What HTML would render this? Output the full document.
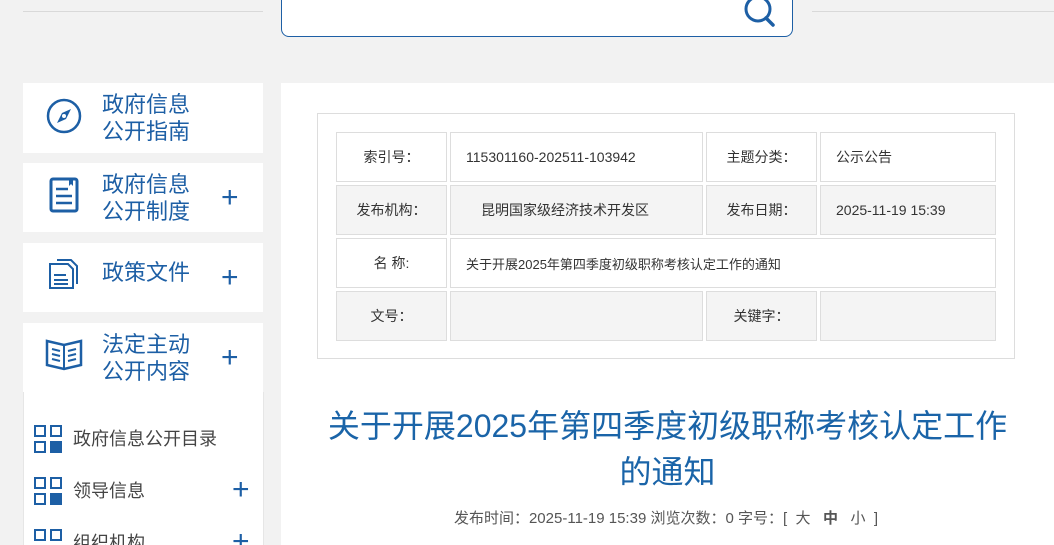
<!DOCTYPE html>
<html><head><meta charset="utf-8"><style>
*{margin:0;padding:0;box-sizing:border-box}
html,body{width:1054px;height:545px;overflow:hidden}
body{background:#f2f2f2;font-family:"Liberation Sans","Noto Sans CJK SC",sans-serif;position:relative}
.line{position:absolute;top:11px;height:1px;background:#d9d9d9}
.search{position:absolute;left:281px;top:-10px;width:512px;height:47px;background:#fff;border:1px solid #1d5fa5;border-radius:0 0 8px 8px}
.side{position:absolute;left:23px;width:240px;background:#fff;color:#1d5fa5}
.side .t{position:absolute;left:79px;font-size:22px;line-height:27px}
.side .plus{position:absolute;left:198px;font-size:30px;font-weight:300;line-height:30px}
.side svg{position:absolute}
.sub{position:absolute;left:23px;top:392px;width:241px;height:153px;background:#fff;border-left:1px solid #e6e6e6;border-right:1px solid #e6e6e6;overflow:hidden}
.si{position:absolute;left:10px;font-size:18px;color:#444}
.si .g{position:absolute;left:0;top:0;width:28px;height:28px}
.si .g i{position:absolute;width:12px;height:12px;border:2px solid #1d5fa5}
.si span{position:absolute;left:39px;top:2px;white-space:nowrap;line-height:24px}
.si b{position:absolute;left:198px;top:-4px;font-size:30px;font-weight:300;color:#1d5fa5}
.main{position:absolute;left:281px;top:83px;width:773px;height:462px;background:#fff;overflow:hidden}
.box{position:absolute;left:36px;top:30px;width:698px;height:246px;border:1px solid #ddd}
table{position:absolute;left:15px;top:15px;border-collapse:separate;border-spacing:3px}
td{border:1px solid #ddd;height:50px;font-size:14px;color:#333;padding:0}
tr.g td{background:#f4f4f4;height:50px}
td.l{text-align:center;width:111px}
td.v{padding-left:15px}
h1{position:absolute;left:0;width:773px;top:320px;text-align:center;font-size:32px;font-weight:normal;color:#1a64a8;line-height:46px;padding:0 44px}
.meta{position:absolute;top:424px;left:0;width:770px;text-align:center;font-size:15px;color:#555}
</style></head><body>
<div class="line" style="left:23px;width:240px"></div>
<div class="line" style="left:812px;width:242px"></div>
<div class="search"><svg style="position:absolute;left:458px;top:2px" width="40" height="36" viewBox="0 0 40 36"><circle cx="18" cy="16" r="12" fill="none" stroke="#1d5fa5" stroke-width="3"/><path d="M26 25l7 7" stroke="#1d5fa5" stroke-width="3.5" stroke-linecap="round"/></svg></div>

<div class="side" style="top:83px;height:70px">
<svg style="left:23px;top:15px" width="36" height="36" viewBox="0 0 36 36"><circle cx="18" cy="18" r="16" fill="none" stroke="#1d5fa5" stroke-width="2.5"/><path d="M25 11l-9 4-5 10 9-4z" fill="#1d5fa5"/><circle cx="18" cy="18" r="2" fill="#fff"/></svg>
<div class="t" style="top:8px">政府信息<br>公开指南</div></div>
<div class="side" style="top:163px;height:69px">
<svg style="left:26px;top:14px" width="30" height="36" viewBox="0 0 30 36"><rect x="2" y="2" width="26" height="32" rx="2" fill="none" stroke="#1d5fa5" stroke-width="3"/><path d="M7 12h12M7 19h16M7 26h16" stroke="#1d5fa5" stroke-width="2.5"/><path d="M20 2v7l2-2 2 2V2" fill="#1d5fa5"/></svg>
<div class="t" style="top:8px">政府信息<br>公开制度</div><div class="plus" style="top:20px">+</div></div>
<div class="side" style="top:243px;height:69px">
<svg style="left:25px;top:15px" width="32" height="32" viewBox="0 0 32 32"><path d="M2 6h18l5 5v19H2z" fill="none" stroke="#1d5fa5" stroke-width="2"/><path d="M9 2h14l6 6v18" fill="none" stroke="#1d5fa5" stroke-width="2"/><path d="M6 17h12M6 22h14M6 26h14" stroke="#1d5fa5" stroke-width="2"/></svg>
<div class="t" style="top:16px">政策文件</div><div class="plus" style="top:20px">+</div></div>
<div class="side" style="top:323px;height:69px">
<svg style="left:22px;top:14px" width="38" height="34" viewBox="0 0 38 34"><path d="M2 4l17 4 17-4v24l-17 4-17-4z" fill="none" stroke="#1d5fa5" stroke-width="2.5"/><path d="M19 8v24M7 12l8 2M7 17l8 2M7 22l8 2M31 12l-8 2M31 17l-8 2M31 22l-8 2" stroke="#1d5fa5" stroke-width="2"/></svg>
<div class="t" style="top:8px">法定主动<br>公开内容</div><div class="plus" style="top:20px">+</div></div>
<div class="sub">
<div class="si" style="top:33px"><div class="g"><i style="left:0;top:0"></i><i style="left:16px;top:0"></i><i style="left:0;top:16px"></i><i style="left:16px;top:16px;background:#1d5fa5"></i></div><span>政府信息公开目录</span></div>
<div class="si" style="top:85px"><div class="g"><i style="left:0;top:0"></i><i style="left:16px;top:0"></i><i style="left:0;top:16px"></i><i style="left:16px;top:16px;background:#1d5fa5"></i></div><span>领导信息</span><b>+</b></div>
<div class="si" style="top:137px"><div class="g"><i style="left:0;top:0"></i><i style="left:16px;top:0"></i><i style="left:0;top:16px"></i><i style="left:16px;top:16px;background:#1d5fa5"></i></div><span>组织机构</span><b>+</b></div>
</div>

<div class="main">
<div class="box"><table>
<tr><td class="l">索引号：</td><td class="v" style="width:253px">115301160-202511-103942</td><td class="l">主题分类：</td><td class="v" style="width:176px">公示公告</td></tr>
<tr class="g"><td class="l">发布机构：</td><td class="v" style="padding-left:30px">昆明国家级经济技术开发区</td><td class="l">发布日期：</td><td class="v">2025-11-19 15:39</td></tr>
<tr><td class="l">名 称:</td><td class="v" colspan="3" style="font-size:13px">关于开展2025年第四季度初级职称考核认定工作的通知</td></tr>
<tr class="g"><td class="l">文号：</td><td></td><td class="l">关键字：</td><td></td></tr>
</table></div>
<h1>关于开展2025年第四季度初级职称考核认定工作的通知</h1>
<div class="meta">发布时间：2025-11-19 15:39 浏览次数：0 字号：[ &nbsp;大 &nbsp; <b>中</b> &nbsp; 小 &nbsp;]</div>
</div>
</body></html>
